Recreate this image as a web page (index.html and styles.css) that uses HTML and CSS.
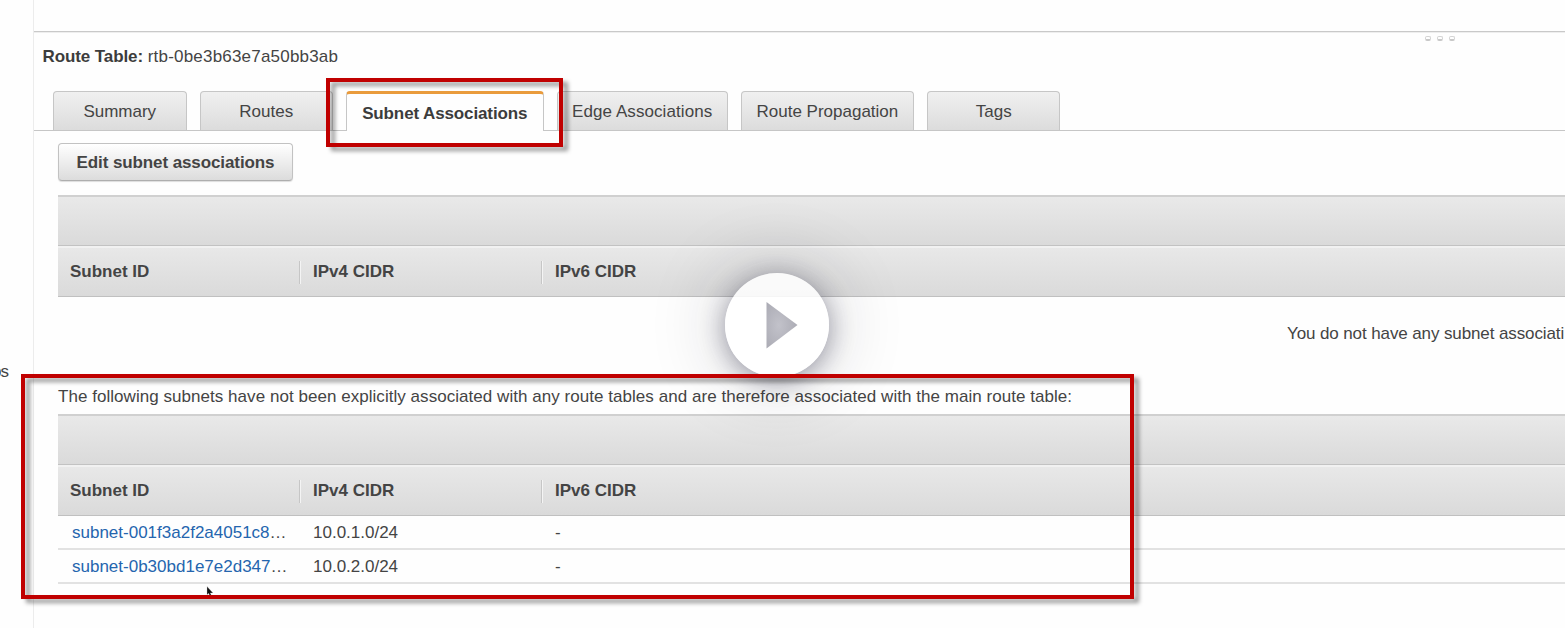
FILE: index.html
```html
<!DOCTYPE html>
<html lang="en">
<head>
<meta charset="utf-8">
<title>Route Table</title>
<link rel="stylesheet" href="styles.css">
</head>
<body>
<div class="app">
  <aside class="sidebar">os</aside>
  <main class="panel">
    <div class="splitter"></div>
    <div class="title-row">
      <h1 class="title"><b>Route Table:</b> <span class="rtb">rtb-0be3b63e7a50bb3ab</span></h1>
      <div class="grip"><i></i><i></i><i></i></div>
    </div>
    <nav class="tabs">
      <a class="tab">Summary</a>
      <a class="tab">Routes</a>
      <a class="tab active">Subnet Associations</a>
      <a class="tab edge">Edge Associations</a>
      <a class="tab prop">Route Propagation</a>
      <a class="tab">Tags</a>
    </nav>
    <div class="content">
      <button class="edit">Edit subnet associations</button>
      <section class="table">
        <div class="bar"></div>
        <div class="head"><b>Subnet ID</b><b>IPv4 CIDR</b><b>IPv6 CIDR</b></div>
        <p class="empty">You do not have any subnet associati</p>
      </section>
      <p class="note">The following subnets have not been explicitly associated with any route tables and are therefore associated with the main route table:</p>
      <section class="table">
        <div class="bar"></div>
        <div class="head"><b>Subnet ID</b><b>IPv4 CIDR</b><b>IPv6 CIDR</b></div>
        <div class="row"><span class="id"><a>subnet-001f3a2f2a4051c8</a>…</span><span>10.0.1.0/24</span><span>-</span></div>
        <div class="row"><span class="id"><a>subnet-0b30bd1e7e2d347</a>…</span><span>10.0.2.0/24</span><span>-</span></div>
      </section>
    </div>
  </main>
</div>
<div class="play">
  <svg width="104" height="104" viewBox="0 0 104 104"><defs><radialGradient id="g" cx=".4" cy=".5" r=".65"><stop offset="0" stop-color="#c2c2ca"/><stop offset="1" stop-color="#aaaab3"/></radialGradient></defs><path d="M41.500 29v46.500L72.500 52z" fill="url(#g)"/></svg>
</div>
<svg class="cursor" width="8" height="12" viewBox="0 0 8 12"><path d="M1 .5v8.300l1.700-1.500 1.400 3.700 1.700-.6-1.500-3.500H7z" fill="#111" stroke="#ccc" stroke-width=".3"/></svg>
<div class="mark mark-tab"></div>
<div class="mark mark-table"></div>
</body>
</html>
```
FILE: styles.css
```css
* { box-sizing: border-box; }
body { margin: 0; background: #fefefe; color: #444; font: 17px/20px "Liberation Sans", Arial, sans-serif; overflow: hidden; }
h1, p { margin: 0; font-weight: normal; font-size: 17px; white-space: nowrap; }
.app { display: flex; width: 1565px; height: 628px; overflow: hidden; }
.sidebar { flex: none; width: 34px; padding-top: 362px; border-right: 1px solid #ececec; text-indent: -8px; letter-spacing: -1px; }
.panel { flex: none; width: 1531px; overflow: hidden; }
.splitter { height: 32px; border-bottom: 1px solid #c9c9c9; box-shadow: 0 1px #eee; }
.title-row { display: flex; justify-content: space-between; height: 59px; padding: 15px 110px 0 8.500px; }
.title b { color: #3c3c3c; letter-spacing: -.1px; }
.rtb { letter-spacing: .2px; }
.grip { display: flex; gap: 6px; margin-top: -11px; }
.grip i { width: 6px; height: 5px; border: 1px solid #d4d4d4; border-bottom: 2px solid #c8c8c8; border-radius: 2px; }
.tabs { display: flex; gap: 13px; height: 40px; padding-left: 19px; border-bottom: 1px solid #c6c6c6; }
.tab { width: 133.500px; height: 39px; padding-top: 10px; text-align: center; white-space: nowrap; border: 1px solid #c6c6c6; border-bottom: 0; border-radius: 4px 4px 0 0; background: linear-gradient(#f0f0f0, #dcdcdc); }
.tab.active { width: 197.500px; height: 40px; padding-top: 10px; font-weight: bold; letter-spacing: -.12px; color: #3c3c3c; background: #fefefe; border-top: 3px solid #e99b3c; }
.tab.edge { width: 171.300px; letter-spacing: .08px; }
.tab.prop { width: 173.200px; }
.content { padding: 12px 0 0 24px; }
.edit { display: block; width: 235px; height: 38px; padding: 1px 0 0; border: 1px solid #c2c2c2; border-bottom-color: #aeaeae; border-radius: 4px; background: linear-gradient(#fff, #dcdcdc); color: #444; font: bold 17px/20px "Liberation Sans", Arial, sans-serif; letter-spacing: -.1px; box-shadow: 0 1px 1px #ddd; }
.table { margin-top: 14px; }
.bar { height: 51px; border-top: 2px solid #d0d0d0; border-bottom: 1px solid #c2c2c2; background: linear-gradient(#e9e9e9, #dadada); }
.head { display: flex; align-items: center; height: 51px; border-top: 2px solid #f1f1f1; border-bottom: 1px solid #c0c0c0; background: linear-gradient(#e8e8e8, #dadada); }
.head b { width: 242px; padding: 0 0 2px 12px; line-height: 21px; }
.head b + b { margin-left: -1px; width: 243px; padding-left: 13px; border-left: 1px solid #c6c6c6; box-shadow: inset 1px 0 #f4f4f4; }
.empty { padding: 27px 0 0 1229px; height: 89px; letter-spacing: -.11px; }
.note { line-height: 20px; height: 20px; margin-top: 1px; letter-spacing: .043px; }
.note + .table { margin-top: 7px; }
.row { display: flex; height: 34px; line-height: 33px; border-bottom: 2px solid #e2e2e2; }
.row span { width: 242px; padding-left: 13px; }
.row .id { padding-left: 14px; }
.row a { color: #2465ae; }
.play { position: absolute; left: 724.500px; top: 273px; width: 104px; height: 104px; border-radius: 50%; background: rgba(255,255,255,.84); box-shadow: 0 4px 24px rgba(35,35,65,.42), 0 0 70px 8px rgba(30,30,40,.17); }
.cursor { position: absolute; left: 206px; top: 586px; }
.mark { position: absolute; border: 4px solid #c00000; filter: drop-shadow(5px 4px 2px rgba(0,0,0,.4)); }
.mark-tab { left: 326px; top: 78px; width: 237px; height: 69px; }
.mark-table { left: 21px; top: 374px; width: 1113px; height: 225px; }
```
